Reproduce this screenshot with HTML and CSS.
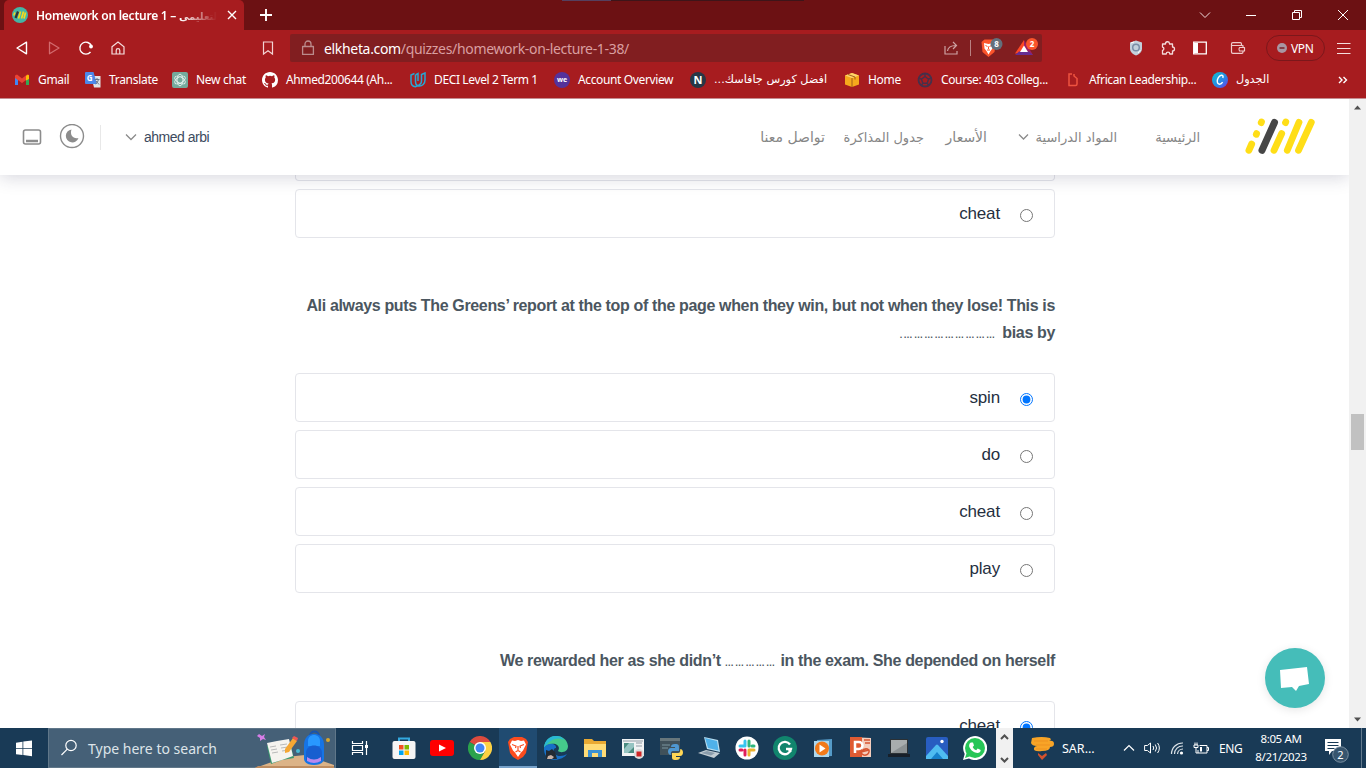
FILE: index.html
```html
<!DOCTYPE html>
<html lang="en">
<head>
<meta charset="utf-8">
<title>Homework on lecture 1</title>
<link rel="stylesheet" href="styles.css">
</head>
<body>
<div class="screen">
  <div class="titlebar">
    <div class="tab">
      <svg class="tab-icon" width="16" height="16" viewBox="0 0 16 16"><circle cx="8" cy="8" r="8" fill="#45b5a5"/><path d="M6.500 11.500l2-7M9.500 11.500l2-7M12 11.500l1.500-6" stroke="#f5d91d" stroke-width="1.700"/><path d="M3.500 11l2.500-6.500" stroke="#333" stroke-width="2.200"/><path d="M1.800 8.500l1-3" stroke="#f5d91d" stroke-width="1.500"/></svg>
      <div class="tab-title">Homework on lecture 1 – <bdi>التعليمى</bdi></div>
      <svg width="10" height="10" viewBox="0 0 10 10"><path d="M1 1l8 8M9 1L1 9" stroke="#fff" stroke-width="1.400"/></svg>
    </div>
    <svg class="plus" width="14" height="14" viewBox="0 0 14 14"><path d="M7 1v12M1 7h12" stroke="#fff" stroke-width="1.900"/></svg>
    <div class="topstrip"><i></i></div>
    <div class="winctl">
      <svg width="12" height="12" viewBox="0 0 12 12"><path d="M1 3.500L6 8.500l5-5" fill="none" stroke="#f0dede"/></svg>
      <svg width="12" height="12" viewBox="0 0 12 12"><path d="M1 6.500h10" stroke="#fff"/></svg>
      <svg width="12" height="12" viewBox="0 0 12 12"><path d="M1.500 3.500h7v7h-7zM3.500 3.500v-2h7v7h-2" fill="none" stroke="#fff"/></svg>
      <svg width="12" height="12" viewBox="0 0 12 12"><path d="M1 1l10 10M11 1L1 11" stroke="#fff"/></svg>
    </div>
  </div>

  <div class="toolbar">
    <div class="nav-icons">
      <svg width="16" height="16" viewBox="0 0 16 16"><path d="M12.500 2.200v11.600L3 8z" fill="none" stroke="#fff" stroke-width="1.400" stroke-linejoin="round"/></svg>
      <svg width="16" height="16" viewBox="0 0 16 16"><path d="M3.500 2.200v11.600L13 8z" fill="none" stroke="#d26a6d" stroke-width="1.300" stroke-linejoin="round"/></svg>
      <svg width="16" height="16" viewBox="0 0 16 16"><path d="M12.500 12A6 6 0 1 1 13.500 6" fill="none" stroke="#fff" stroke-width="1.400"/><circle cx="13" cy="6.500" r="1.900" fill="#fff"/></svg>
      <svg width="16" height="16" viewBox="0 0 16 16"><path d="M2 6.800L8 2l6 4.800V14H2zM6.200 14v-3.500a1.800 1.800 0 0 1 3.600 0V14" fill="none" stroke="#f6dede" stroke-width="1.200"/></svg>
    </div>
    <svg class="bm-flag" width="12" height="16" viewBox="0 0 12 16"><path d="M1.500 2h9v12L6 10.800 1.500 14z" fill="none" stroke="#f3d3d3" stroke-width="1.200"/></svg>
    <div class="address">
      <svg width="14" height="16" viewBox="0 0 14 16"><path d="M1.600 6.500h10.800v7.900H1.600zM4 6.500V4a3 3 0 0 1 6 0v2.500" fill="none" stroke="#bb8b8c" stroke-width="1.300" stroke-linejoin="round"/></svg>
      <div class="url">elkheta.com<span>/quizzes/homework-on-lecture-1-38/</span></div>
      <svg class="share" width="16" height="16" viewBox="0 0 16 16"><path d="M2 6v8h12v-3M4.500 11c.5-4 3-5.500 8.500-5.500M10 2l3.500 3.500L10 9" fill="none" stroke="#cda2a3" stroke-width="1.200"/></svg>
      <i class="sep"></i>
      <svg class="shield" width="24" height="22" viewBox="0 0 24 22"><path d="M1.500 5l3-2.500h8l3 2.500-1 10-6 5-6-5z" fill="#fb542b"/><path d="M4 6l4.500 1L13 6l-.5 5.500-2 2.500-2 3.500-2-3.500-2-2.500z" fill="#fff"/><path d="M5.500 8.500l2 1M11.500 8.500l-2 1M7 13h3M8.500 9.500V12" stroke="#fb542b"/><circle cx="16.500" cy="7" r="6" fill="#63707c"/><text x="16.500" y="10" text-anchor="middle" class="badge-text">8</text></svg>
      <svg class="bat" width="24" height="22" viewBox="0 0 24 22"><path d="M9 3v7l-4 6.500H0z" fill="#ff4724"/><path d="M9 3l9 15-4-1-5-7z" fill="#9e1f63"/><path d="M0 18l4-3.500h10l4 3.500z" fill="#662d91"/><path d="M9 8.500l4 6.500H5z" fill="#fff"/><circle cx="17" cy="7" r="6" fill="#fb542b"/><text x="17" y="10" text-anchor="middle" class="badge-text">2</text></svg>
    </div>
    <div class="ext">
      <svg width="16" height="16" viewBox="0 0 16 16"><path d="M8 .5l6 2v6c0 3.500-3 6-6 7-3-1-6-3.500-6-7v-6z" fill="#c3d0dc"/><circle cx="8" cy="7.500" r="3.300" fill="none" stroke="#798da7" stroke-width="1.500"/><path d="M3 3l3-1M10 13l2.500-3" stroke="#fff"/></svg>
      <svg width="16" height="16" viewBox="0 0 16 16"><path d="M2.500 4h3a2 2 0 0 1 4-.5V4h3v3a2 2 0 0 1 0 4v3H9.800a1.800 1.800 0 0 0-3.600 0H2.500v-3.500a1.800 1.800 0 0 0 0-3.500z" fill="none" stroke="#f3dada" stroke-width="1.300" stroke-linejoin="round"/></svg>
      <svg width="16" height="16" viewBox="0 0 16 16"><path d="M1.700 2.200h12.600v11.600H1.700z" fill="none" stroke="#fff" stroke-width="1.300"/><path d="M2 3h4v10H2z" fill="#fff"/></svg>
      <svg width="16" height="16" viewBox="0 0 16 16"><path d="M13 7.500V5.500H1.500V12q0 1.300 1.300 1.300h9q1.200 0 1.200-1.300v-1M1.500 5.500V4q0-1.300 1.300-1.300h7.500q1.200 0 1.200 1.300v1.500M14.500 7.500H9.500q-1.200 1.700 0 3.500h5z" fill="none" stroke="#efcccc" stroke-width="1.200" stroke-linejoin="round"/></svg>
    </div>
    <div class="vpn"><svg width="10" height="10" viewBox="0 0 10 10"><circle cx="5" cy="5" r="5" fill="#a996a2"/><path d="M2.500 5h5" stroke="#792128" stroke-width="1.500"/></svg>VPN</div>
    <svg class="menu" width="14" height="12" viewBox="0 0 14 12"><path d="M0 1.500h13.500M0 6.500h13.500M0 11.500h13.500" stroke="#f5dede" stroke-width="1.200"/></svg>
  </div>

  <div class="bookmarks">
    <div><svg width="16" height="16" viewBox="0 0 16 16"><path d="M1 4v9h3V6" fill="#4285f4"/><path d="M12 6v7h3V4" fill="#34a853"/><path d="M1 3.500l2-1 5 4 5-4 2 1V6l-7 5-7-5z" fill="#ea4335"/><path d="M12 4l2-1.500 1 1V7l-3 1.500z" fill="#fbbc04"/></svg><span class="b1">Gmail</span></div>
    <div><svg width="16" height="16" viewBox="0 0 16 16"><path d="M6 4h9.500v11.500H9z" fill="#dfe3e8"/><path d="M1 0h7.500l3.500 12H1a1 1 0 0 1-1-1V1a1 1 0 0 1 1-1z" fill="#4c87ea"/><text x="1.700" y="8.800" class="g-letter">G</text><path d="M9.500 7.500h5M12 6v1.500M13.500 7.500q-.5 3-3 4.500M11 9l3 3.500" fill="none" stroke="#64748a"/></svg><span class="b2">Translate</span></div>
    <div><svg width="16" height="16" viewBox="0 0 16 16"><rect width="16" height="16" rx="2" fill="#74aa9c"/><g fill="none" stroke="#e9f4f1" stroke-width=".9"><ellipse cx="8" cy="8" rx="3" ry="5.800"/><ellipse cx="8" cy="8" rx="3" ry="5.800" transform="rotate(60 8 8)"/><ellipse cx="8" cy="8" rx="3" ry="5.800" transform="rotate(120 8 8)"/></g></svg><span class="b3">New chat</span></div>
    <div><svg width="16" height="16" viewBox="0 0 16 16"><path fill="#fff" d="M8 0C3.580 0 0 3.580 0 8c0 3.540 2.290 6.530 5.470 7.590.4.070.55-.17.55-.38v-1.490c-2.010.37-2.530-.49-2.690-.94-.09-.23-.48-.94-.82-1.130-.28-.15-.68-.52-.01-.53.63-.01 1.080.58 1.230.82.72 1.210 1.870.87 2.330.66.07-.52.28-.87.51-1.070-1.780-.2-3.640-.89-3.640-3.950 0-.87.31-1.590.82-2.150-.08-.2-.36-1.020.08-2.120 0 0 .67-.21 2.200.82a7.600 7.600 0 0 1 4 0c1.530-1.040 2.200-.82 2.200-.82.44 1.100.16 1.920.08 2.120.51.56.82 1.270.82 2.150 0 3.070-1.870 3.750-3.650 3.950.29.25.54.73.54 1.480v2.200c0 .21.150.46.55.38A8 8 0 0 0 16 8c0-4.420-3.580-8-8-8z"/></svg><span class="b4">Ahmed200644 (Ah...</span></div>
    <div><svg width="16" height="16" viewBox="0 0 16 16"><path d="M4.500 1.500L1 3v6.500c0 3 1.700 5 4.500 5.200l2.500-1.200M5.500 3v6.500c0 3 1.500 4.500 4 4.500s5.500-2 5.500-6V1L11.500 2.500v6c0 2.500-1 4-3 4.500M5.500 3L8 1.500V9" fill="none" stroke="#28a7d3" stroke-width="1.500"/></svg><span class="b5">DECI Level 2 Term 1</span></div>
    <div><svg width="16" height="16" viewBox="0 0 16 16"><circle cx="8" cy="8" r="8" fill="#55329b"/><text x="8" y="10" text-anchor="middle" class="we">we</text></svg><span class="b6">Account Overview</span></div>
    <div><svg width="16" height="16" viewBox="0 0 16 16"><circle cx="8" cy="8" r="8" fill="#263747"/><text x="8" y="12" text-anchor="middle" class="n-letter">N</text></svg><span class="b7" dir="rtl">افضل كورس جافاسك...</span></div>
    <div><svg width="16" height="16" viewBox="0 0 16 16"><path d="M1 3.500l7-2.500 7 2.500v9L8 15l-7-2.500z" fill="#f6a81c"/><path d="M1 3.500L8 6l7-2.500L8 1z" fill="#ffd56a"/><path d="M8 6v9M4 2.500l7 2.500v2.500" fill="none" stroke="#9a5416" stroke-width=".9"/></svg><span class="b8">Home</span></div>
    <div><svg width="16" height="16" viewBox="0 0 16 16"><g fill="none" stroke="#46304a" stroke-width="1.400"><circle cx="8" cy="8" r="6.500" stroke-width="1.800"/><path d="M8 4.500l3.500 2.700-1.300 4H5.800l-1.300-4zM8 1v3.500M15 6l-3.500 1M4.500 7L1 6M5.800 11.200L4 14M10.200 11.200L12 14"/></g></svg><span class="b9">Course: 403 Colleg...</span></div>
    <div><svg width="15" height="16" viewBox="0 0 15 16"><path d="M6 2H3v11.500h6.500q1.500 0 1.500-1.500V6.500L8 4V2" fill="none" stroke="#ee5340" stroke-width="1.500"/></svg><span class="b10">African Leadership...</span></div>
    <div><svg width="16" height="16" viewBox="0 0 16 16"><defs><linearGradient id="cv" x1="0" y1="0" x2="1" y2="1"><stop stop-color="#0bc3d0"/><stop offset=".6" stop-color="#2b84e5"/><stop offset="1" stop-color="#7434e8"/></linearGradient></defs><circle cx="8" cy="8" r="8" fill="url(#cv)"/><path d="M10.800 6c.8-2-.3-3-1.600-2.700-2.500.5-4.200 4-3.900 6.500.3 3.200 3.800 3.100 5.300.4" fill="none" stroke="#fff" stroke-width="1.400"/></svg><span class="b11">الجدول</span></div>
    <svg class="more" width="10" height="8" viewBox="0 0 10 8"><path d="M1 1l3 3-3 3M5.500 1l3 3-3 3" fill="none" stroke="#fff" stroke-width="1.400"/></svg>
  </div>

  <div class="viewport">
    <div class="page">
      <header class="site-header" dir="rtl">
        <svg class="logo" width="72" height="37" viewBox="0 0 72 37"><g stroke="#ffde17" stroke-width="6.800" stroke-linecap="round"><path d="M67.300 4.300L54.500 32.300M55 4.300L43.300 32.300M37.700 15.500L30 32.300M7.700 26L4.900 32.300M41.800 4l-.3.700M17.500 4l-.3.700M12.600 15.600l-.3.700"/></g><path d="M30.500 4.500L18 32.300" stroke="#464646" stroke-width="7" stroke-linecap="round"/></svg>
        <nav>
          <a class="n1">الرئيسية</a><a class="n2">المواد الدراسية</a>
          <svg width="11" height="8" viewBox="0 0 11 8"><path d="M1 1.500l4.500 4.500L10 1.500" fill="none" stroke="#8b8b8b" stroke-width="1.300"/></svg>
          <a class="n3">الأسعار</a><a class="n4">جدول المذاكرة</a><a class="n5">تواصل معنا</a>
        </nav>
        <div class="user" dir="ltr">
          <svg width="20" height="18" viewBox="0 0 20 18"><rect x="1.500" y="2" width="17" height="14" rx="2" fill="none" stroke="#8c8c8c" stroke-width="1.600"/><path d="M4 13h12" stroke="#8c8c8c" stroke-width="2.500"/></svg>
          <svg width="26" height="26" viewBox="0 0 26 26"><circle cx="13" cy="12" r="11.500" fill="none" stroke="#8c8c8c" stroke-width="1.400"/><path d="M12.500 5.500a6.500 6.500 0 1 0 7 8.500c-5 1.500-9-3-7-8.500z" fill="#8c8c8c"/></svg>
          <i></i>
          <svg width="12" height="8" viewBox="0 0 12 8"><path d="M1 1.500L6 6.500l5-5" fill="none" stroke="#8b8b8b" stroke-width="1.300"/></svg>
          <span>ahmed arbi</span>
        </div>
      </header>
      <main class="quiz" dir="rtl">
        <div class="opt cut"></div>
        <label class="opt"><input type="radio" name="q0"><span>cheat</span></label>
        <h3 class="two"><span dir="ltr" class="q1">Ali always puts The Greens’ report at the top of the page when they win, but not when they lose! This is</span><br><span dir="ltr"><span class="dots">.………………………</span><span class="by">bias by</span></span></h3>
        <label class="opt"><input type="radio" name="q1" checked><span>spin</span></label>
        <label class="opt"><input type="radio" name="q1"><span>do</span></label>
        <label class="opt"><input type="radio" name="q1"><span>cheat</span></label>
        <label class="opt"><input type="radio" name="q1"><span>play</span></label>
        <h3><span dir="ltr" class="q2">We rewarded her as she didn’t <span class="dots">……………</span> in the exam. She depended on herself</span></h3>
        <label class="opt"><input type="radio" name="q2" checked><span>cheat</span></label>
      </main>
      <div class="chat"><svg width="60" height="60" viewBox="0 0 60 60"><path d="M15 22l27-3 2 17-10 2-3 5-4-4-11 1z" fill="#fff"/></svg></div>
    </div>
    <div class="scrollbar">
      <svg width="7" height="5" viewBox="0 0 7 5"><path d="M0 4.500h7L3.500.5z" fill="#505050"/></svg>
      <i></i>
      <svg width="7" height="5" viewBox="0 0 7 5"><path d="M0 .5h7L3.500 4.500z" fill="#505050"/></svg>
    </div>
  </div>

  <div class="taskbar">
    <div class="cell"><svg width="16" height="17" viewBox="0 0 16 17"><path d="M0 2.700l6.500-1v6.300H0zM7.300 1.600L16 .4V8H7.300zM0 8.800h6.500V15L0 14.200zM7.300 8.800H16v7.500l-8.700-1.200z" fill="#fff"/></svg></div>
    <div class="search">
      <svg width="18" height="18" viewBox="0 0 18 18"><circle cx="11" cy="6.500" r="5.200" fill="none" stroke="#fff" stroke-width="1.200"/><path d="M7.300 10.200L1.500 16" stroke="#fff" stroke-width="1.200"/></svg>
      <span>Type here to search</span>
      <svg width="80" height="39" viewBox="0 0 80 39"><path d="M0 39L31 28l19-2 29 10v3z" fill="#dcb387"/><path d="M0 39l3-2h76v2z" fill="#be8c60"/><path d="M4 5l3 2 3-2-1 3 2 3-3-1-3 2 0-3-3-2z" fill="#d77ee8"/><path d="M12 17l12-2 11-1 4 15-12 2-11 4z" fill="#3c9a70"/><path d="M12 14l10-2 5 19-10 3zM22 12l12-2 4 17-11 4z" fill="#f5f3ef"/><path d="M15 18l6-1M16 21l6-1M17 24l6-1M25 16l7-1M26 19l7-1M27 22l7-1" stroke="#b9b9b9"/><path d="M30 20l8-11 4 3-8 11-4 1z" fill="#f5a733"/><path d="M37 9l2-2 4 2-1 3z" fill="#ef5753"/><path d="M55 7c0-6 9-6 9 0" fill="none" stroke="#1954ae" stroke-width="2"/><path d="M49 16c0-15 20-15 20 0v14q-1 6-10 6t-10-6z" fill="#1674e5"/><path d="M53 12c0-8 12-8 12 0v5H53z" fill="#2998ff"/><path d="M51 24c0-10 16-10 16 0v7q-8 5-16 0z" fill="#185fd0"/><path d="M52 28q7 5 14 0v4q-7 4-14 0z" fill="#b889ef"/><circle cx="43" cy="22" r="2" fill="#47bcd6"/><circle cx="73" cy="11" r="2" fill="#d7a52d"/></svg>
    </div>
    <div class="cell"><svg width="18" height="18" viewBox="0 0 18 18"><path d="M1.500 2v2.500h10V2M1.500 16v-2.500h10V16M1.500 6.500h10v5h-10zM15.500 2v14" fill="none" stroke="#fff" stroke-width="1.200"/><path d="M14 6h3v3h-3z" fill="#fff"/></svg></div>
    <div class="apps">
      <div><svg width="24" height="24" viewBox="0 0 24 24"><path d="M7 6V2.500h10V6" fill="none" stroke="#33a9e0" stroke-width="2"/><rect x=".5" y="5" width="23" height="18" rx="2" fill="#f5f5f5"/><path d="M7 9h4.500v4.500H7z" fill="#f25022"/><path d="M12.500 9H17v4.500h-4.500z" fill="#7fba00"/><path d="M7 14.500h4.500V19H7z" fill="#00a4ef"/><path d="M12.500 14.500H17V19h-4.500z" fill="#ffb900"/></svg></div>
      <div><svg width="24" height="24" viewBox="0 0 24 24"><rect y="4" width="24" height="16" rx="3" fill="#f00"/><path d="M9 8.500l7 3.500-7 3.500z" fill="#fff"/></svg></div>
      <div><svg width="24" height="24" viewBox="0 0 24 24"><path d="M12 12L1.600 6A12 12 0 0 1 22.400 6z" fill="#dd4b3e"/><path d="M12 12L1.600 6A12 12 0 0 0 12 24l5-9z" fill="#2ba24c"/><path d="M12 6h10.400A12 12 0 0 1 12 24l5.200-9z" fill="#fdd143"/><circle cx="12" cy="12" r="6" fill="#fff"/><circle cx="12" cy="12" r="4.500" fill="#4285f4"/></svg></div>
      <div class="active"><svg width="24" height="24" viewBox="0 0 24 24"><path d="M2 6l2-3 4-2h8l4 2 2 3-2 11-3 4-5 3-5-3-3-4z" fill="#fb4c1e"/><path d="M6 4.500l3 .5 3-1 3 1 3-.5 2 4-3 6-2 2-3 4.500-3-4.500-2-2-3-6z" fill="#fff"/><path d="M6 8.500l4 1.500-.5 2M18 8.500L14 10l.5 2M12 10v5M9.500 16l2.500-1.500 2.500 1.500" stroke="#fb4c1e" stroke-width="1.200" fill="none"/></svg></div>
      <div><svg width="24" height="24" viewBox="0 0 24 24"><path d="M0 12C1-3 22-4 24 10c0 7-8 7-10 5 4-6-6-11-14-3z" fill="#45c98b"/><path d="M0 12C1-3 18-2 20 4 12 0 5 5 0 12z" fill="#29b8d3"/><path d="M0 12c3-6 13-5 12 0-4 0-3 8 4 8 3 0 5-1 7-2C18 26-1 27 0 12z" fill="#1770c7"/><path d="M2 14l3 1 3-2 3 3 2 7H2z" fill="#222b33"/><path d="M4 20l3-1 3 2-2 2H3z" fill="#c8b3a8"/></svg></div>
      <div><svg width="24" height="24" viewBox="0 0 24 24"><path d="M1 4V3h8l2 2h12v16H1z" fill="#e9aa33"/><path d="M1 8h22v13H1z" fill="#ffdc76"/><path d="M5 21v-7h14v7h-4v-4H9v4z" fill="#3b91d2"/></svg></div>
      <div><svg width="24" height="24" viewBox="0 0 24 24"><path d="M1 3h22v17H1z" fill="#f1f3f4"/><path d="M3 7h10v10H3z" fill="#498b80"/><path d="M3 13l5-6h5v4l-6 6H3z" fill="#96c4c2"/><path d="M15 7h6M15 10h6M2 5h20" stroke="#8f9ba5"/><circle cx="18" cy="18" r="5" fill="#ddd"/><path d="M15.500 15.500h5v5h-5z" fill="#cf2525"/></svg></div>
      <div><svg width="24" height="24" viewBox="0 0 24 24"><path d="M1 2h20v17H1z" fill="#40515a"/><path d="M1 2h20v3H1z" fill="#68777c"/><path d="M3 9h8M3 12h6" stroke="#7b969e"/><path d="M16 8c4 0 4 1 4 4v3h-6c-3 0-2 4-2 4-4 0-4-7 0-7h4v-1h-4c0-2 1-3 4-3z" fill="#4f98d1"/><path d="M17 24c-4 0-4-1-4-4v-3h6c3 0 2-4 2-4 4 0 4 7 0 7h-4v1h4c0 2-1 3-4 3z" fill="#ffd755"/></svg></div>
      <div><svg width="24" height="24" viewBox="0 0 24 24"><path d="M7 1l14 3 2 12-13-3z" fill="#bbdff1"/><path d="M8 2l12 3 1.500 9.500-10.500-2.500z" fill="#4fb1ea"/><path d="M1 17l8-3 14 3-6 5z" fill="#c3cdd3"/><path d="M4 17l6-2 8 2-4 2.500z" fill="#8a9cab"/></svg></div>
      <div><svg width="24" height="24" viewBox="0 0 24 24"><circle cx="12" cy="12" r="11.500" fill="#fff"/><g stroke-width="3" stroke-linecap="round"><path d="M10 5v5M5 10h5" stroke="#36c5f0"/><path d="M14 5v5M19 10h-2" stroke="#2eb67d"/><path d="M14 14h5M14 14v5" stroke="#ecb22e"/><path d="M10 14v5M5 14h2" stroke="#e01e5a"/></g></svg></div>
      <div><svg width="24" height="24" viewBox="0 0 24 24"><circle cx="12" cy="12" r="12" fill="#11856d"/><path d="M17 8.500A6.200 6.200 0 1 0 18 13h-5M15.500 13l2.500 3" fill="none" stroke="#fff" stroke-width="2.300"/></svg></div>
      <div><svg width="24" height="24" viewBox="0 0 24 24"><path d="M6 4l15-1v17l-15 1z" fill="#559bc8"/><path d="M3 5h15v16H3z" fill="#add7ed"/><circle cx="11" cy="12.500" r="7" fill="#f27a1a"/><path d="M8.500 8.500l6 4-6 4z" fill="#fff"/></svg></div>
      <div><svg width="24" height="24" viewBox="0 0 24 24"><path d="M1 1l21 1v19H1z" fill="#f4cdbd"/><path d="M1 1h12v20H1z" fill="#df5b33"/><path d="M6 17V6h4a3.500 3.500 0 0 1 0 7H6" fill="none" stroke="#fff" stroke-width="2.500"/><path d="M15 4h6M16 7h5M12 16a4 4 0 1 0 8-2q-4-3-8 2l8-2" fill="none" stroke="#d65532" stroke-width="1.500"/></svg></div>
      <div><svg width="24" height="24" viewBox="0 0 24 24"><path d="M3 3h18v15H3z" fill="#2b3135"/><path d="M4 4h16v13H4z" fill="#a8adae"/><path d="M4 17L20 7v10z" fill="#8b9193"/><path d="M1 18h22v3H1z" fill="#17202a"/></svg></div>
      <div><svg width="24" height="24" viewBox="0 0 24 24"><rect x="1" y="1" width="22" height="22" rx="2" fill="#285dc1"/><path d="M1 23v-3L11 9q1-1 2 0l10 11v3z" fill="#4fbcf1"/><path d="M6 23l6-7 6 7z" fill="#1681cc"/><circle cx="17" cy="5.500" r="1.700" fill="#fff"/></svg></div>
      <div><svg width="24" height="24" viewBox="0 0 24 24"><path d="M0 24l1.700-6A12 12 0 1 1 6 22.400z" fill="#fff"/><circle cx="12" cy="12" r="10" fill="#27c657"/><path d="M2 22l2-6 4 4z" fill="#27c657"/><path d="M8 6.500l2 0 1 3-1.300 1.500c1 2 2 2.700 3.500 3.300l1.500-1.700 3 1.500c0 5-9 3.500-11.500-3.500C6 8.500 6.500 7 8 6.500z" fill="#fff"/></svg></div>
    </div>
    <div class="mini-scroll"><svg width="9" height="6" viewBox="0 0 9 6"><path d="M1 5l3.500-3.500L8 5" fill="none" stroke="#505050" stroke-width="2"/></svg><svg width="9" height="6" viewBox="0 0 9 6"><path d="M1 1l3.500 3.500L8 1" fill="none" stroke="#505050" stroke-width="2"/></svg></div>
    <div class="stock"><svg width="24" height="26" viewBox="0 0 24 26"><path d="M2 3q10-2 18 0 2 2-1 3 5-1 5 3 0 3-4 3 0 4-8 4-9 1-8-3 1-2 3-2-5 0-6-3z" fill="#f8a427"/><path d="M4 6h14M6 10h14M6 14h11" stroke="#ee9121"/><path d="M8 18l4 3 4-3 1 2-5 5-4-5z" fill="#d4522d"/></svg><span>SAR...</span></div>
    <div class="tray">
      <svg width="12" height="8" viewBox="0 0 12 8"><path d="M1 6.500L6 1.500l5 5" fill="none" stroke="#fff" stroke-width="1.200"/></svg>
      <svg width="17" height="14" viewBox="0 0 17 14"><path d="M.6 4.500h2.800L6.500 2v10L3.400 9.500H.6zM9 5q1.500 2 0 4M11.300 3.500q2.500 3.500 0 7M13.600 2q3.500 5 0 10" fill="none" stroke="#fff"/></svg>
      <svg width="14" height="14" viewBox="0 0 14 14"><path d="M1.500 13A11 11 0 0 1 13 2M4.500 13A8 8 0 0 1 13 5M7.500 13A5.500 5.500 0 0 1 13 8" fill="none" stroke="#dce3e8" stroke-width="1.200"/><circle cx="11.500" cy="12" r="1.600" fill="#fff"/></svg>
      <svg width="16" height="13" viewBox="0 0 16 13"><path d="M6.500 3.500H14v7.500H5V8M14 5.500h1.500v3H14M1 3h4v2.500H1zM2 3V.5M4 3V.5M3 5.500V11H5" fill="none" stroke="#fff"/><path d="M7 5h2v4.500H7z" fill="#fff"/></svg>
      <span>ENG</span>
    </div>
    <div class="clock"><span>8:05 AM</span><span>8/21/2023</span></div>
    <div class="notif"><svg width="26" height="26" viewBox="0 0 26 26"><path d="M2 2h16v12H9l-3 4v-4H2z" fill="#fff"/><path d="M4.500 5.500h11M4.500 8.500h11M4.500 11.500h7" stroke="#193a56"/><circle cx="17.500" cy="17.500" r="7.800" fill="#37556e" stroke="#8da0ae" stroke-width=".8"/><text x="17.500" y="21.500" text-anchor="middle">2</text></svg></div>
    <i class="peek"></i>
  </div>
</div>
</body>
</html>
```
FILE: styles.css
```css
* { box-sizing: border-box; }
body { margin: 0; font-family: "Noto Sans", "DejaVu Sans", sans-serif; }
svg { display: block; flex: none; }
.screen { width: 1366px; height: 768px; overflow: hidden; display: flex; flex-direction: column; }

.titlebar { height: 30px; background: #6c1113; display: flex; align-items: center; padding-left: 4px; }
.tab { width: 240px; height: 30px; background: #a71c1f; border-radius: 5px 5px 0 0; display: flex; align-items: center; padding-left: 8px; }
.tab-title { width: 181px; margin: 0 10px 0 8px; overflow: hidden; white-space: nowrap; color: #fff; font-size: 12px; font-weight: 600; letter-spacing: -.25px; -webkit-mask-image: linear-gradient(to right, #000 80%, transparent 100%); mask-image: linear-gradient(to right, #000 80%, transparent 100%); }
.tab-title bdi { font: bold 10px "DejaVu Sans", sans-serif; letter-spacing: 0; }
.plus { margin-left: 15px; }
.topstrip { align-self: flex-start; margin-left: 289px; width: 242px; height: 1px; background: #3d1519; }
.topstrip i { display: block; width: 49px; height: 1px; background: #55405f; }
.winctl { margin-left: auto; padding-right: 17px; display: flex; gap: 34px; }

.toolbar { height: 36px; background: #a71c1f; display: flex; align-items: center; }
.nav-icons { display: flex; gap: 16px; padding-left: 14px; }
.bm-flag { margin-left: 136px; }
.address { width: 752px; height: 28px; margin-left: 16px; background: #811e20; border-radius: 2px; display: flex; align-items: center; padding-left: 11px; }
.url { margin-left: 9px; width: 608px; color: #fff; font-size: 14px; letter-spacing: -.33px; white-space: nowrap; }
.url span { color: #d99fa0; }
.share { margin-left: 11px; }
.sep { width: 1px; height: 16px; background: #b98182; margin: 0 9px 0 11px; }
.bat { margin-left: 11px; }
.badge-text { fill: #fff; font: bold 8px "Noto Sans", sans-serif; }
.ext { margin-left: 86px; display: grid; grid-template-columns: 32px 32px 38px 16px; }
.vpn { margin-left: 20px; width: 59px; height: 26px; border: 1px solid #7b171b; border-radius: 13px; color: #fff; font-size: 12px; letter-spacing: -.4px; display: flex; align-items: center; gap: 4px; padding-left: 10px; }
.menu { margin-left: 12px; }

.bookmarks { height: 33px; background: #a71c1f; border-bottom: 1px solid #c58c90; display: grid; grid-template-columns: 71px 87px 90px 148px 144px 136px 154px 73px 149px 146px 126px 10px; align-items: center; padding: 0 0 5px 14px; color: #fff; font-size: 12px; }
.bookmarks div { display: flex; align-items: center; gap: 8px; white-space: nowrap; }
.bookmarks span { letter-spacing: -.3px; }
.bookmarks .b4, .bookmarks .b5, .bookmarks .b6, .bookmarks .b9, .bookmarks .b10 { letter-spacing: -.37px; }
.bookmarks .b7, .bookmarks .b11 { font-family: "DejaVu Sans", sans-serif; font-size: 11.250px; letter-spacing: 0; }
.g-letter { fill: #fff; font: bold 8px "Noto Sans", sans-serif; }
.we { fill: #fff; font: bold 7px "Noto Sans", sans-serif; }
.n-letter { fill: #fff; font: bold 11px "Noto Sans", sans-serif; }

.viewport { height: 629px; display: flex; }
.page { position: relative; width: 1349px; height: 629px; background: #fff; overflow: hidden; }
.site-header { position: relative; z-index: 1; height: 76px; background: #fff; box-shadow: 0 3px 16px rgba(40, 40, 80, .18); display: flex; align-items: center; padding: 0 33px 0 22px; }
.logo { margin-bottom: 1px; }
nav { display: flex; align-items: center; margin-right: 44px; color: #868686; font: 13px "DejaVu Sans", sans-serif; white-space: nowrap; }
nav a { display: block; }
.n1 { width: 45px; }
.n2 { width: 81px; margin-right: 38px; }
nav svg { margin: 0 7px 0 31px; }
.n3 { width: 43px; font-size: 14px; }
.n4 { width: 79px; margin-right: 20px; }
.n5 { width: 65px; margin-right: 20px; font-size: 14px; }
.user { margin-right: auto; display: flex; align-items: center; color: #3d4b60; font: 14px "Liberation Sans", sans-serif; letter-spacing: -.5px; }
.user svg + svg { margin-left: 17px; }
.user i { width: 1px; height: 25px; background: #e8e8e8; margin: 0 24px 0 15px; }
.user span { margin-left: 7px; }

.quiz { width: 760px; margin-left: 295px; font-family: "Liberation Sans", Arial, sans-serif; }
.opt { height: 49px; border: 1px solid #e4e5ea; border-radius: 4px; margin-bottom: 8px; display: flex; align-items: center; padding-right: 21px; color: #252f3f; font-size: 17px; letter-spacing: -.15px; }
.opt.cut { height: 6px; border-top: 0; border-radius: 0 0 4px 4px; }
.opt input { margin: 4px 0 0 20px; width: 13px; height: 13px; }
.quiz h3 { height: 27px; margin: 54px 0 27px; font-size: 16px; line-height: 27px; font-weight: bold; color: #4b5660; white-space: nowrap; letter-spacing: -.35px; }
.quiz h3.two { height: 54px; }
.by { margin-left: 6px; }
.dots { font-size: 9px; letter-spacing: 1.300px; line-height: 1; }
.chat { position: absolute; left: 1265px; top: 549px; width: 60px; height: 60px; border-radius: 50%; background: #45bdb9; box-shadow: 0 2px 10px rgba(0, 0, 0, .1); }
.scrollbar { width: 17px; background: #f1f1f1; display: flex; flex-direction: column; align-items: center; padding: 6px 0; }
.scrollbar i { width: 13px; height: 36px; background: #c1c1c1; margin: 304px 0 auto; }

.taskbar { height: 40px; background: #193a56; display: flex; color: #fff; }
.cell { width: 48px; display: flex; align-items: center; justify-content: center; }
.search { width: 288px; background: #456077; border: 1px solid #607789; display: flex; align-items: center; padding-left: 11px; }
.search span { width: 180px; margin-left: 10px; margin-right: -2px; font-size: 14px; color: #dde4e9; white-space: nowrap; }
.search svg:last-child { margin-left: 8px; }
.apps { margin-left: 1px; width: 611px; display: grid; grid-template-columns: repeat(16, 38.1px); }
.apps div { display: flex; align-items: center; justify-content: center; }
.apps .active { background: #204b71; border-bottom: 2px solid #76a1c9; padding-top: 2px; }
.mini-scroll { width: 17px; background: #f1f1f1; display: flex; flex-direction: column; justify-content: space-between; align-items: center; padding: 6px 0 5px; }
.stock { width: 110px; padding-left: 17px; display: flex; align-items: center; gap: 8px; font-size: 12.500px; }
.tray { display: flex; align-items: center; font-size: 12px; width: 131px; }
.tray svg + svg { margin-left: 9px; }
.tray span { margin-left: 10px; letter-spacing: -.4px; }
.clock { width: 54px; display: flex; flex-direction: column; align-items: center; justify-content: center; font-size: 11.500px; line-height: 18px; letter-spacing: -.35px; white-space: nowrap; }
.notif { margin-left: 15px; width: 38px; padding-top: 9px; }
.notif text { fill: #fff; font: 11px "Noto Sans", sans-serif; }
.peek { width: 1px; background: #637a8d; }
```
